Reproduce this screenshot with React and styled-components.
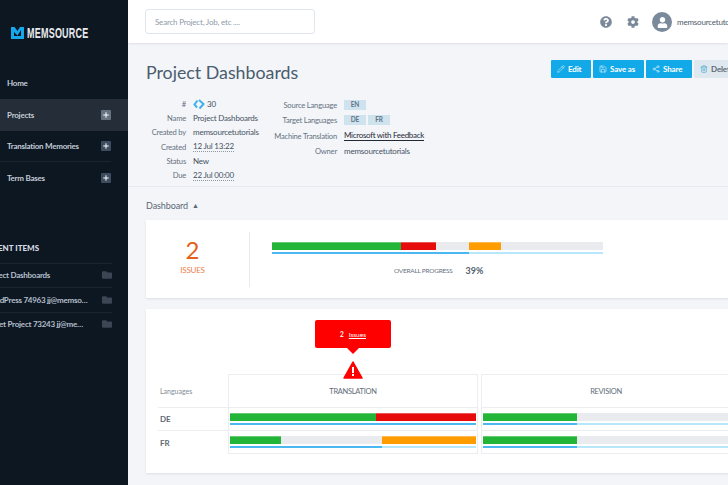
import React from 'react';
import styled, { createGlobalStyle } from 'styled-components';
import { Pencil, Save, Share2, Trash2, Plus } from 'lucide-react';
import { FaCog, FaFolder, FaQuestionCircle, FaUser } from 'react-icons/fa';

const Global = createGlobalStyle`
  html, body {
    margin: 0;
    height: 100%;
    overflow: hidden;
    background: #f3f5f9;
    font-family: "Lato", "Liberation Sans", sans-serif;
  }
  #root { height: 100%; }
`;

const Page = styled.div`
  display: flex;
  width: 728px;
  height: 485px;
  overflow: hidden;
`;

const Sidebar = styled.aside`
  flex: 0 0 128px;
  background: #0c1722;
  overflow: hidden;
  color: #c3ccd6;
`;

const Logo = styled.div`
  display: flex;
  align-items: center;
  gap: 3px;
  height: 18px;
  padding: 24px 0 0 11px;
`;

const Wordmark = styled.span`
  display: block;
  width: 62px;
  font-family: "Liberation Sans", sans-serif;
  font-weight: 700;
  font-size: 15.5px;
  letter-spacing: 0.4px;
  color: #e8ebee;
  white-space: nowrap;
  transform: scaleX(0.58);
  transform-origin: left center;
`;

const NavList = styled.nav`
  margin-top: 25px;
`;

const NavItem = styled.div`
  display: flex;
  align-items: center;
  justify-content: space-between;
  height: ${p => (p.$tall ? 32 : 31.5)}px;
  padding: 0 17px 0 7px;
  font-size: 8px;
  font-weight: 700;
  letter-spacing: -0.25px;
  background: ${p => (p.$active ? '#252d38' : 'transparent')};
  position: relative;
  ${p => p.$rule && `
    &::after {
      content: '';
      position: absolute;
      left: 0;
      right: 17px;
      bottom: 0;
      height: 1px;
      background: #1b2530;
    }
  `}
`;

const PlusBox = styled.span`
  display: flex;
  align-items: center;
  justify-content: center;
  width: 10px;
  height: 10px;
  border-radius: 1px;
  background: ${p => (p.$active ? '#667280' : '#3d4c5e')};
  color: #fff;
`;

const RecentTitle = styled.div`
  margin: 49px 0 10px -17px;
  font-size: 8px;
  font-weight: 900;
  color: #d5dbe2;
  white-space: nowrap;
`;

const RecentItem = styled.div`
  display: flex;
  align-items: center;
  justify-content: space-between;
  height: 24.5px;
  margin-right: 16px;
  border-top: 1px solid #1b2530;
  box-sizing: border-box;
  font-size: 8px;
  font-weight: 700;
  letter-spacing: -0.25px;
  color: #b5bfca;
`;

const RecentLabel = styled.span`
  margin-left: -15px;
  white-space: nowrap;
`;

const Main = styled.main`
  flex: 1;
  min-width: 0;
  overflow: hidden;
`;

const TopBar = styled.header`
  display: flex;
  align-items: center;
  height: 43px;
  background: #fff;
  box-shadow: 0 1px 2px rgba(60, 80, 100, 0.12);
  position: relative;
`;

const Search = styled.div`
  box-sizing: border-box;
  flex: none;
  width: 170px;
  height: 25px;
  margin-left: 17px;
  padding-left: 9px;
  display: flex;
  align-items: center;
  border: 1px solid #e1e6ec;
  border-radius: 3px;
  font-size: 8px;
  letter-spacing: -0.2px;
  color: #8f9aa8;
`;

const TopIcons = styled.div`
  display: flex;
  flex: none;
  align-items: center;
  margin-left: 285px;
  color: #7b8a9b;
  white-space: nowrap;
`;

const Avatar = styled.span`
  display: flex;
  align-items: flex-end;
  justify-content: center;
  box-sizing: border-box;
  width: 20px;
  height: 20px;
  padding-bottom: 4px;
  margin: 0 5px 0 13px;
  border-radius: 50%;
  background: #7b8a9b;
  color: #fff;
`;

const UserName = styled.span`
  font-size: 8px;
  letter-spacing: -0.2px;
  color: #4d5a68;
`;

const GearSlot = styled.span`
  display: flex;
  margin-left: 15px;
`;

const TitleRow = styled.div`
  display: flex;
  align-items: center;
  height: 47px;
  padding-left: 18px;
`;

const Title = styled.h1`
  flex: 0 0 405px;
  margin: 10px 0 0;
  font-size: 17.8px;
  font-weight: 400;
  color: #4a5c6e;
  white-space: nowrap;
`;

const Actions = styled.div`
  display: flex;
  gap: 2px;
  margin-top: 4px;
`;

const ActionButton = styled.button`
  display: flex;
  align-items: center;
  box-sizing: border-box;
  width: ${p => p.$w}px;
  height: 18px;
  padding: 0 0 0 6px;
  border: 0;
  border-radius: 1px;
  font: 700 8px "Lato", sans-serif;
  letter-spacing: -0.15px;
  background: ${p => (p.$muted ? '#dfe8ee' : '#12a9e8')};
  color: ${p => (p.$muted ? '#5d6b78' : '#fff')};
  flex: none;
  white-space: nowrap;
  overflow: hidden;
`;

const ButtonIcon = styled.span`
  display: flex;
  flex: 0 0 11px;
  opacity: 0.75;
`;

const Meta = styled.section`
  display: grid;
  grid-template-columns: 128px 1fr;
  height: 97px;
  padding-top: 7px;
  box-sizing: border-box;
  border-bottom: 1px solid #e6ebf1;
`;

const MetaColumn = styled.dl`
  display: grid;
  grid-template-columns: ${p => p.$label}px 1fr;
  column-gap: 7px;
  grid-auto-rows: ${p => p.$row}px;
  align-items: center;
  margin: 0;
  align-content: start;
`;

const MetaLabel = styled.dt`
  text-align: right;
  font-size: 7.6px;
  letter-spacing: -0.2px;
  color: #66727f;
  white-space: nowrap;
`;

const MetaValue = styled.dd`
  display: flex;
  align-items: center;
  gap: 2px;
  margin: 0;
  font-size: 8px;
  letter-spacing: -0.2px;
  color: #46525f;
  white-space: nowrap;
`;

const DateText = styled.span`
  border-bottom: 1px dotted #8c98a5;
`;

const LinkText = styled.span`
  color: #1f2a36;
  letter-spacing: -0.3px;
  border-bottom: 1px solid #1f2a36;
`;

const LangTag = styled.span`
  display: inline-block;
  width: 22px;
  height: 10px;
  line-height: 10px;
  text-align: center;
  font-size: 6.5px;
  font-weight: 700;
  background: #cfe3ee;
  color: #5f7488;
`;

const SectionToggle = styled.div`
  display: flex;
  align-items: center;
  gap: 4px;
  box-sizing: border-box;
  height: 33px;
  padding: 3px 0 0 18px;
  font-size: 9px;
  letter-spacing: -0.1px;
  color: #5c6875;
`;

const ToggleArrow = styled.span`
  font-size: 7px;
`;

const Card = styled.section`
  width: 640px;
  margin-left: 18px;
  background: #fff;
  box-shadow: 0 1px 2px rgba(60, 80, 100, 0.13);
`;

const SummaryCard = styled(Card)`
  display: flex;
  align-items: center;
  height: 78px;
`;

const IssuesBox = styled.div`
  flex: 0 0 104px;
  box-sizing: border-box;
  height: 55px;
  padding: 4px 10px 0 0;
  display: flex;
  flex-direction: column;
  align-items: center;
  border-right: 1px solid #e7ebf0;
  color: #e4611c;
`;

const IssuesCount = styled.div`
  font-size: 24px;
  line-height: 28px;
`;

const IssuesLabel = styled.div`
  font-size: 8px;
  line-height: 10px;
  letter-spacing: -0.25px;
  color: #ea7f4d;
  margin-top: 1px;
`;

const Summary = styled.div`
  width: 331px;
  margin-left: 22px;
`;

const Progress = styled.div`
  display: flex;
  align-items: center;
  gap: 13px;
  margin: 11px 0 0 122px;
`;

const ProgressLabel = styled.span`
  font-size: 6.5px;
  letter-spacing: -0.25px;
  color: #66727f;
`;

const ProgressValue = styled.span`
  font-size: 9px;
  font-weight: 700;
  color: #55636f;
`;

const BarTrack = styled.div`
  display: flex;
  height: 8px;
  background: #e9ebee;
`;

const BarPart = styled.div`
  box-sizing: border-box;
  height: 100%;
  background: ${p => p.$color};
  border-top: 1px solid rgba(255, 255, 255, 0.3);
`;

const ProgressLine = styled.div`
  height: 2px;
  margin-top: 2px;
  background: #b8e7fb;
`;

const ProgressFill = styled.div`
  height: 100%;
  background: #4cb8f2;
`;

const MatrixCard = styled(Card)`
  height: 164px;
  margin-top: 11px;
  padding: 11px 0 0 12px;
  box-sizing: border-box;
`;

const Marker = styled.div`
  display: flex;
  flex-direction: column;
  align-items: center;
  width: 250px;
  margin-left: 70px;
  height: 54px;
`;

const Bubble = styled.div`
  position: relative;
  width: 76px;
  height: 28px;
  margin-bottom: 13px;
  flex: none;
  display: flex;
  align-items: center;
  justify-content: center;
  gap: 5px;
  background: #ff0000;
  border-radius: 2px;
  color: #fff;
  font-size: 6.5px;
  font-weight: 700;
  &::after {
    content: '';
    position: absolute;
    left: 50%;
    bottom: -6px;
    margin-left: -6px;
    border-left: 6px solid transparent;
    border-right: 6px solid transparent;
    border-top: 6px solid #ff0000;
  }
`;

const BubbleLink = styled.span`
  text-decoration: underline;
  font-weight: 400;
`;

const WarningIcon = styled.svg`
  flex: none;
  position: relative;
`;

const Matrix = styled.div`
  display: flex;
`;

const LabelColumn = styled.div`
  flex: 0 0 70px;
`;

const LabelHead = styled.div`
  display: flex;
  align-items: center;
  height: 34px;
  padding-left: 2px;
  font-size: 7px;
  color: #7f8a95;
  border-bottom: 1px solid #ebedf0;
  box-sizing: border-box;
`;

const LabelRow = styled.div`
  display: flex;
  align-items: center;
  height: 23px;
  padding-left: 2px;
  font-size: 8px;
  font-weight: 700;
  color: #5f6a75;
  box-sizing: border-box;
  ${p => p.$rule && 'border-bottom: 1px solid #ebedf0;'}
`;

const Stage = styled.div`
  flex: 0 0 250px;
  box-sizing: border-box;
  margin-right: 3px;
  border: 1px solid #ebedf0;
`;

const StageHead = styled.div`
  display: flex;
  align-items: center;
  justify-content: center;
  box-sizing: border-box;
  height: 33px;
  border-bottom: 1px solid #ebedf0;
  font-size: 7.5px;
  letter-spacing: -0.3px;
  color: #626d78;
`;

const StageRow = styled.div`
  box-sizing: border-box;
  height: ${p => (p.$rule ? 23 : 22)}px;
  padding: 5px 1px 0;
  ${p => p.$rule && 'border-bottom: 1px solid #ebedf0;'}
`;

const GREEN = '#22b537';
const RED = '#e60c0c';
const ORANGE = '#ff9d00';

const Bar = ({ parts, progress }) => (
  <>
    <BarTrack>
      {parts.map(([color, left, width]) => (
        <BarPart key={color} $color={color} style={{ marginLeft: left, width }} />
      ))}
    </BarTrack>
    <ProgressLine>
      <ProgressFill style={{ width: progress }} />
    </ProgressLine>
  </>
);

const Warning = () => (
  <WarningIcon width="20" height="18" viewBox="0 0 20 18">
    <path d="M10 1 L19 17 H1 Z" fill="#ff0000" stroke="#ff0000" strokeWidth="1.5" strokeLinejoin="round" />
    <rect x="9" y="6" width="2" height="6" fill="#fff" />
    <rect x="9" y="13" width="2" height="2" fill="#fff" />
  </WarningIcon>
);

const LogoMark = () => (
  <svg width="13" height="12" viewBox="0 0 13 12">
    <path d="M0 0 L3.5 0 L6.5 4 L9 0 L13 0 L13 12 L0 12 Z" fill="#17a8ec" />
    <path d="M3 5 L6.5 8.5 L10 3 L10 9 L3 9 Z" fill="#0c1722" />
  </svg>
);

const IdMark = () => (
  <svg width="12" height="11" viewBox="0 0 12 11" fill="none" stroke="#3fb2ea" strokeWidth="2">
    <path d="M4.5 1.5 L1.5 5.5 L4 8.5" />
    <path d="M6 1 L10.5 5 L6.5 9.5" />
  </svg>
);

const recent = ['Project Dashboards', 'WordPress 74963 jj@memso…', 'Target Project 73243 jj@me…'];

export default function App() {
  return (
    <Page>
      <Global />
      <Sidebar>
        <Logo>
          <LogoMark />
          <Wordmark>MEMSOURCE</Wordmark>
        </Logo>
        <NavList>
          <NavItem>Home</NavItem>
          <NavItem $active $tall>
            Projects
            <PlusBox $active><Plus size={8} strokeWidth={3} /></PlusBox>
          </NavItem>
          <NavItem $rule>
            Translation Memories
            <PlusBox><Plus size={8} strokeWidth={3} /></PlusBox>
          </NavItem>
          <NavItem>
            Term Bases
            <PlusBox><Plus size={8} strokeWidth={3} /></PlusBox>
          </NavItem>
        </NavList>
        <RecentTitle>RECENT ITEMS</RecentTitle>
        {recent.map(name => (
          <RecentItem key={name}>
            <RecentLabel>{name}</RecentLabel>
            <FaFolder size={10} color="#3a4653" />
          </RecentItem>
        ))}
      </Sidebar>
      <Main>
        <TopBar>
          <Search>Search Project, Job, etc ....</Search>
          <TopIcons>
            <FaQuestionCircle size={12} />
            <GearSlot><FaCog size={12} /></GearSlot>
            <Avatar><FaUser size={11} /></Avatar>
            <UserName>memsourcetutorials</UserName>
          </TopIcons>
        </TopBar>
        <TitleRow>
          <Title>Project Dashboards</Title>
          <Actions>
            <ActionButton $w={40}><ButtonIcon><Pencil size={8} /></ButtonIcon>Edit</ActionButton>
            <ActionButton $w={51}><ButtonIcon><Save size={8} /></ButtonIcon>Save as</ActionButton>
            <ActionButton $w={46}><ButtonIcon><Share2 size={8} /></ButtonIcon>Share</ActionButton>
            <ActionButton $w={50} $muted><ButtonIcon><Trash2 size={8} color="#1694cc" /></ButtonIcon>Delete</ActionButton>
          </Actions>
        </TitleRow>
        <Meta>
          <MetaColumn $label={58} $row={14.2}>
            <MetaLabel>#</MetaLabel>
            <MetaValue><IdMark /> 30</MetaValue>
            <MetaLabel>Name</MetaLabel>
            <MetaValue>Project Dashboards</MetaValue>
            <MetaLabel>Created by</MetaLabel>
            <MetaValue>memsourcetutorials</MetaValue>
            <MetaLabel>Created</MetaLabel>
            <MetaValue><DateText>12 Jul 13:22</DateText></MetaValue>
            <MetaLabel>Status</MetaLabel>
            <MetaValue>New</MetaValue>
            <MetaLabel>Due</MetaLabel>
            <MetaValue><DateText>22 Jul 00:00</DateText></MetaValue>
          </MetaColumn>
          <MetaColumn $label={81} $row={15.5}>
            <MetaLabel>Source Language</MetaLabel>
            <MetaValue><LangTag>EN</LangTag></MetaValue>
            <MetaLabel>Target Languages</MetaLabel>
            <MetaValue><LangTag>DE</LangTag><LangTag>FR</LangTag></MetaValue>
            <MetaLabel>Machine Translation</MetaLabel>
            <MetaValue><LinkText>Microsoft with Feedback</LinkText></MetaValue>
            <MetaLabel>Owner</MetaLabel>
            <MetaValue>memsourcetutorials</MetaValue>
          </MetaColumn>
        </Meta>
        <SectionToggle>Dashboard <ToggleArrow>▲</ToggleArrow></SectionToggle>
        <SummaryCard>
          <IssuesBox>
            <IssuesCount>2</IssuesCount>
            <IssuesLabel>ISSUES</IssuesLabel>
          </IssuesBox>
          <Summary>
            <Bar
              parts={[[GREEN, 0, 129], [RED, 0, 35], [ORANGE, 33, 32]]}
              progress={197}
            />
            <Progress>
              <ProgressLabel>OVERALL PROGRESS</ProgressLabel>
              <ProgressValue>39%</ProgressValue>
            </Progress>
          </Summary>
        </SummaryCard>
        <MatrixCard>
          <Marker>
            <Bubble>2 <BubbleLink>Issues</BubbleLink></Bubble>
            <Warning />
          </Marker>
          <Matrix>
            <LabelColumn>
              <LabelHead>Languages</LabelHead>
              <LabelRow $rule>DE</LabelRow>
              <LabelRow>FR</LabelRow>
            </LabelColumn>
            <Stage>
              <StageHead>TRANSLATION</StageHead>
              <StageRow $rule>
                <Bar parts={[[GREEN, 0, 146], [RED, 0, 100]]} progress={246} />
              </StageRow>
              <StageRow>
                <Bar parts={[[GREEN, 0, 51], [ORANGE, 101, 94]]} progress={152} />
              </StageRow>
            </Stage>
            <Stage>
              <StageHead>REVISION</StageHead>
              <StageRow $rule>
                <Bar parts={[[GREEN, 0, 94]]} progress={94} />
              </StageRow>
              <StageRow>
                <Bar parts={[[GREEN, 0, 94]]} progress={94} />
              </StageRow>
            </Stage>
          </Matrix>
        </MatrixCard>
      </Main>
    </Page>
  );
}
